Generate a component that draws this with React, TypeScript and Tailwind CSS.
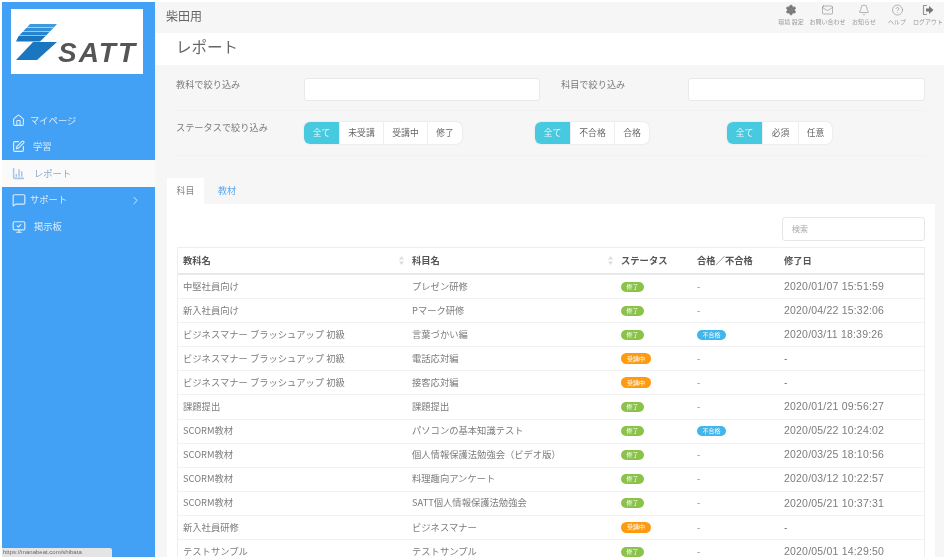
import { ChevronRight, CircleHelp, Bell, Home, Mail, MessageSquare, MonitorCheck, Settings, SquarePen, BarChart3 } from 'lucide-react'

const jp = "font-['Noto_Sans_CJK_JP','Liberation_Sans',sans-serif]"

const rows = [
  ['中堅社員向け', 'プレゼン研修', 'done', '-', '2020/01/07 15:51:59'],
  ['新入社員向け', 'Pマーク研修', 'done', '-', '2020/04/22 15:32:06'],
  ['ビジネスマナー ブラッシュアップ 初級', '言葉づかい編', 'done', 'fail', '2020/03/11 18:39:26'],
  ['ビジネスマナー ブラッシュアップ 初級', '電話応対編', 'doing', '-', '-'],
  ['ビジネスマナー ブラッシュアップ 初級', '接客応対編', 'doing', '-', '-'],
  ['課題提出', '課題提出', 'done', '-', '2020/01/21 09:56:27'],
  ['SCORM教材', 'パソコンの基本知識テスト', 'done', 'fail', '2020/05/22 10:24:02'],
  ['SCORM教材', '個人情報保護法勉強会（ビデオ版）', 'done', '-', '2020/03/25 18:10:56'],
  ['SCORM教材', '料理趣向アンケート', 'done', '-', '2020/03/12 10:22:57'],
  ['SCORM教材', 'SATT個人情報保護法勉強会', 'done', '-', '2020/05/21 10:37:31'],
  ['新入社員研修', 'ビジネスマナー', 'doing', '-', '-'],
  ['テストサンプル', 'テストサンプル', 'done', '-', '2020/05/01 14:29:50'],
]

function Logo() {
  return (
    <div className="ml-[9px] w-[132px] h-[65px] bg-white flex items-start pl-[5px] pt-[15px]">
      <svg width="42" height="36" viewBox="0 0 42 36" className="shrink-0">
        <path d="M14 0H41L37.8 3.4H10.8Z" fill="#3f9ade" />
        <path d="M10.2 4H37.2L34 7.4H7Z" fill="#3391d9" />
        <path d="M6.4 8H33.4L30.2 11.4H3.2Z" fill="#2685d0" />
        <path d="M2.6 12H29.6L24 17.5H0Z" fill="#1b76c2" />
        <path d="M17 18H41L21 36H0Z" fill="#1b76c2" />
      </svg>
      <span className="mt-[15px] text-[#555] text-[28px] leading-none font-bold italic font-['Liberation_Sans',sans-serif] tracking-[2px]">SATT</span>
    </div>
  )
}

function NavItem({ icon, label, active, chevron, gap }: { icon: React.ReactNode; label: string; active?: boolean; chevron?: boolean; gap: string }) {
  return (
    <div className={`h-[26.6px] flex items-center pl-[10px] pr-[13px] text-[9.3px] ${active ? 'bg-[#fafafa] text-[#8fa6c4]' : 'text-[#dcecfb]'}`}>
      {icon}
      <span className={gap}>{label}</span>
      {chevron && <ChevronRight className="w-[13px] h-[13px] ml-auto" strokeWidth={1.7} />}
    </div>
  )
}

function Sidebar() {
  return (
    <aside className="w-[153px] shrink-0 bg-[#42a1f5] pt-[7px] h-full">
      <Logo />
      <nav className="mt-[33px]">
        <NavItem icon={<Home className="w-[13px] h-[13px]" strokeWidth={2} />} label="マイページ" gap="ml-[5px] mt-[1px]" />
        <NavItem icon={<SquarePen className="w-[13px] h-[13px]" strokeWidth={2.2} />} label="学習" gap="ml-[8px]" />
        <NavItem active icon={<BarChart3 className="w-[13px] h-[13px] text-[#a9c5e8]" strokeWidth={2.8} />} label="レポート" gap="ml-[9px]" />
        <NavItem chevron icon={<MessageSquare className="w-[14px] h-[14px]" strokeWidth={2} />} label="サポート" gap="ml-[4px]" />
        <NavItem icon={<MonitorCheck className="w-[14px] h-[14px]" strokeWidth={2} />} label="掲示板" gap="ml-[8px]" />
      </nav>
    </aside>
  )
}

function TopIcon({ icon, label, width }: { icon: React.ReactNode; label: string; width: string }) {
  return (
    <div className={`${width} flex flex-col items-center text-[#888]`}>
      {icon}
      <span className="text-[6px] leading-[9px] whitespace-nowrap mt-[1px] text-[#999]">{label}</span>
    </div>
  )
}

function LogoutIcon() {
  return (
    <svg width="12" height="12" viewBox="0 0 12 12">
      <path d="M5 1.5H1.5V10.5H5" fill="none" stroke="#999" strokeWidth="1.2" />
      <path d="M4 4.5H7V2L11.5 6L7 10V7.5H4Z" fill="#777" />
    </svg>
  )
}

function Segments({ items }: { items: [string, string][] }) {
  return (
    <div className="flex h-[22px] rounded-[6px] overflow-hidden bg-white shadow-[0_0_2px_rgba(0,0,0,0.12)] text-[8.8px]">
      {items.map(([t, w], i) => (
        <div key={t} className={`${w} flex items-center justify-center ${i === 0 ? 'bg-[#47c9e0] text-[#e8fafd]' : 'text-[#666] border-l border-[#eeeeee]'}`}>{t}</div>
      ))}
    </div>
  )
}

function Pill({ kind }: { kind: string }) {
  if (kind === 'done') return <span className="inline-flex items-center justify-center w-[23px] h-[10px] rounded-full bg-[#8bc34a] text-white text-[6px] leading-none">修了</span>
  if (kind === 'doing') return <span className="inline-flex items-center justify-center w-[30px] h-[11px] rounded-full bg-[#ff9a0e] text-white text-[6px] leading-none">受講中</span>
  return <span className="inline-flex items-center justify-center w-[29px] h-[10px] rounded-full bg-[#42b6ea] text-white text-[6px] leading-none">不合格</span>
}

function SortMark() {
  return (
    <svg width="5" height="9" viewBox="0 0 5 9" className="mr-[3px]">
      <path d="M2.5 0L5 3.5H0Z M2.5 9L0 5.5H5Z" fill="#dcdcdc" />
    </svg>
  )
}

export default function App() {
  const grid = 'grid grid-cols-[229px_209px_76px_87px_1fr] items-center'

  return (
    <div className={`relative w-[946px] h-[559px] overflow-hidden bg-white p-[2px] flex text-[#7c7c7c] blur-[0.35px] ${jp}`}>
      <Sidebar />

      <main className="flex-1 min-w-0 bg-[#f6f6f6] flex flex-col">
        {/* Header */}
        <header className="h-[31px] shrink-0 flex items-start justify-between pl-[11px]">
          <span className="text-[12px] leading-none text-[#666] mt-[8px]">柴田用</span>
          <div className="flex pt-[2px]">
            <TopIcon width="w-[36px]" label="環境 設定" icon={<Settings className="w-[12px] h-[12px] fill-[#777]" strokeWidth={1.8} />} />
            <TopIcon width="w-[37px]" label="お問い合わせ" icon={<Mail className="w-[13px] h-[12px]" strokeWidth={1.2} />} />
            <TopIcon width="w-[36px]" label="お知らせ" icon={<Bell className="w-[12px] h-[12px]" strokeWidth={1.2} />} />
            <TopIcon width="w-[30px]" label="ヘルプ" icon={<CircleHelp className="w-[13px] h-[12px]" strokeWidth={1.2} />} />
            <TopIcon width="w-[32px]" label="ログアウト" icon={<LogoutIcon />} />
          </div>
        </header>

        {/* Title */}
        <div className="h-[32px] shrink-0 bg-white flex items-start pt-[6px] pl-[21px]">
          <h1 className="text-[15.5px] text-[#666] font-normal leading-none">レポート</h1>
        </div>

        {/* Filters */}
        <div className="pl-[21px] pr-[19px] pt-[13px] shrink-0 h-[113px]">
          <div className="flex items-start h-[33px] border-b border-[#f2f2f2]">
            <span className="w-[128px] text-[9.2px] leading-[13px]">教科で絞り込み</span>
            <div className="w-[236px] h-[23px] bg-white border border-[#e9e9e9] rounded-[3px]" />
            <span className="ml-[21px] w-[127px] text-[9.2px] leading-[13px]">科目で絞り込み</span>
            <div className="w-[237px] h-[23px] bg-white border border-[#e9e9e9] rounded-[3px]" />
          </div>
          <div className="flex items-start pt-[11px] h-[45px] border-b border-[#f2f2f2]">
            <span className="w-[128px] text-[9.2px] leading-[13px] mt-[-1px]">ステータスで絞り込み</span>
            <Segments items={[['全て', 'w-[35px]'], ['未受講', 'w-[44px]'], ['受講中', 'w-[44px]'], ['修了', 'w-[35px]']]} />
            <div className="ml-[73px]">
              <Segments items={[['全て', 'w-[35px]'], ['不合格', 'w-[44px]'], ['合格', 'w-[35px]']]} />
            </div>
            <div className="ml-[78px]">
              <Segments items={[['全て', 'w-[35px]'], ['必須', 'w-[36px]'], ['任意', 'w-[34px]']]} />
            </div>
          </div>
        </div>

        {/* Tabs */}
        <div className="pl-[12px] pr-[9px] flex-1 min-h-0 flex flex-col">
          <div className="flex h-[26px] shrink-0 text-[9px]">
            <div className="w-[37px] bg-white flex items-center justify-center text-[#888]">科目</div>
            <div className="w-[46px] flex items-center justify-center text-[#5aa5ef]">教材</div>
          </div>
          <section className="flex-1 min-h-0 bg-white px-[10px] pt-[13px] overflow-hidden">
            <div className="flex justify-end pb-[6px]">
              <div className="w-[143px] h-[24px] border border-[#e6e6e6] rounded-[3px] flex items-center pl-[9px] text-[8px] text-[#aaa]">検索</div>
            </div>
            <div className="border-t border-x border-[#eeeeee] text-[9.3px]">
              <div className={`${grid} h-[27px] border-b-2 border-[#e8e8e8] text-[#555] font-bold`}>
                <div className="pl-[5px] flex items-center justify-between">教科名<SortMark /></div>
                <div className="pl-[5px] flex items-center justify-between">科目名<SortMark /></div>
                <div className="pl-[5px]">ステータス</div>
                <div className="pl-[5px]">合格／不合格</div>
                <div className="pl-[5px]">修了日</div>
              </div>
              {rows.map((r, i) => (
                <div key={i} className={`${grid} h-[24.1px] border-b border-[#f2f2f2]`}>
                  <div className="pl-[5px] whitespace-nowrap">{r[0]}</div>
                  <div className="pl-[5px] whitespace-nowrap">{r[1]}</div>
                  <div className="pl-[5px] flex"><Pill kind={r[2]} /></div>
                  <div className="pl-[5px] flex">{r[3] === 'fail' ? <Pill kind="fail" /> : <span>-</span>}</div>
                  <div className="pl-[5px] font-['Liberation_Sans',sans-serif] text-[10.5px] tracking-[0.2px]">{r[4]}</div>
                </div>
              ))}
            </div>
          </section>
        </div>
      </main>

      {/* browser status tooltip */}
      <div className="absolute left-[2px] bottom-[2px] h-[9px] w-[110px] bg-[#e4e4e4] rounded-tr-[2px] text-[6px] leading-[9px] text-[#666] pl-[1px] whitespace-nowrap overflow-hidden font-['Liberation_Sans',sans-serif]">
        https://manabeat.com/shibata
      </div>
    </div>
  )
}
